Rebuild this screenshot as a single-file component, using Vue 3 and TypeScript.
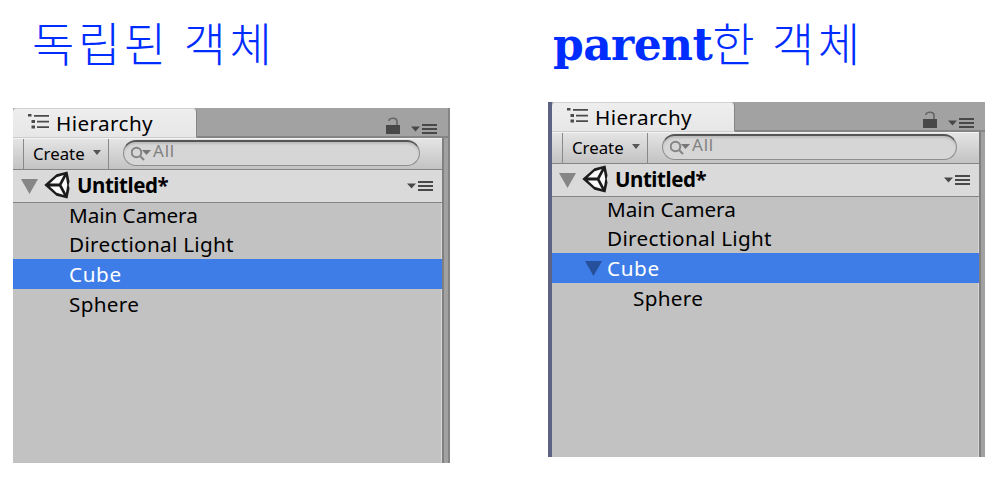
<script setup lang="ts">
interface Item {
  name: string
  indent?: boolean
  selected?: boolean
  open?: boolean
}
interface Panel {
  id: string
  latin: string
  hangul: string
  items: Item[]
}

const panels: Panel[] = [
  {
    id: 'separate',
    latin: '',
    hangul: '독립된 객체',
    items: [
      { name: 'Main Camera' },
      { name: 'Directional Light' },
      { name: 'Cube', selected: true },
      { name: 'Sphere' },
    ],
  },
  {
    id: 'parented',
    latin: 'parent',
    hangul: '한 객체',
    items: [
      { name: 'Main Camera' },
      { name: 'Directional Light' },
      { name: 'Cube', selected: true, open: true },
      { name: 'Sphere', indent: true },
    ],
  },
]
</script>

<template>
  <main class="page">
    <section v-for="p in panels" :key="p.id" class="column" :class="p.id">
      <h1 class="heading"><span v-if="p.latin" class="latin">{{ p.latin }}</span><span class="hangul">{{ p.hangul }}</span></h1>
      <div class="window">
        <div class="tabbar">
          <div class="tab">
            <svg class="tree" width="21" height="16" viewBox="0 0 21 16" fill="#4a4a4a">
              <path d="M0 0h3.500v2.500H0zM3.500 6h3.500v3H3.500zM3.500 11.500h3.500v3H3.500zM6 1h15v1.800H6zM9 6.700h12v1.800H9zM9 12.200h12v1.800H9z" />
            </svg>
            <span class="tab-name">Hierarchy</span>
          </div>
          <svg class="lock" width="14" height="18" viewBox="0 0 14 18">
            <path d="M3 4V3.200Q3.500 1.200 7 1.200Q11 1.200 11 4.500V9" fill="none" stroke="#666" stroke-width="1.600" />
            <path d="M0 8h14v9H0z" fill="#484848" />
          </svg>
          <svg class="menu" width="26" height="10" viewBox="0 0 26 10" fill="#484848">
            <path d="M0 2.500h9L4.500 7.500zM11 0h15v2H11zM11 4h15v2H11zM11 8h15v2H11z" />
          </svg>
        </div>
        <div class="toolbar">
          <div class="create">
            <span>Create</span>
            <svg width="8" height="5" viewBox="0 0 8 5"><path d="M0 0h8L4 5z" fill="#555" /></svg>
          </div>
          <div class="search">
            <svg width="22" height="16" viewBox="0 0 22 16">
              <circle cx="5.500" cy="6.500" r="4.800" fill="none" stroke="#858585" stroke-width="2" />
              <path d="M9 10l4 4" stroke="#858585" stroke-width="2.200" />
              <path d="M11 4h9l-4.500 5z" fill="#777" />
            </svg>
            <span>All</span>
          </div>
        </div>
        <div class="scene">
          <svg class="fold" width="17" height="15" viewBox="0 0 17 15"><path d="M0 0h17L8.500 15z" fill="#868686" /></svg>
          <svg class="logo" width="27" height="28" viewBox="0 0 27 28">
            <path d="M25.500 10.500L23.500 0.500 12.500 3.300 0.300 14l12.200 10.700 11 2.800 2-10L24.700 14z" fill="#1b1b1b" />
            <path d="M5.800 12.600L12.600 6.300 19.800 4l-4.600 8.600zM5.800 15.400l6.800 6.300 7.200 2.300-4.600-8.600zM17.500 14l4.400-8.200L23.300 14l-1.400 8.200z" fill="#fafafa" />
          </svg>
          <span class="scene-name">Untitled*</span>
          <svg class="menu" width="26" height="10" viewBox="0 0 26 10" fill="#484848">
            <path d="M0 2.500h9L4.500 7.500zM11 0h15v2H11zM11 4h15v2H11zM11 8h15v2H11z" />
          </svg>
        </div>
        <ul class="items">
          <li v-for="i in p.items" :key="i.name" :class="{ selected: i.selected, indent: i.indent }">
            <span class="arrow">
              <svg v-if="i.open" width="17" height="15" viewBox="0 0 17 15"><path d="M0 0h17L8.500 15z" fill="#27509a" /></svg>
            </span>
            <span class="name">{{ i.name }}</span>
          </li>
        </ul>
      </div>
    </section>
  </main>
</template>

<style>
body {
  background: #fff;
}
</style>

<style scoped>
.page {
  display: flex;
  gap: 98px;
  width: 996px;
  height: 482px;
  padding-left: 13px;
  box-sizing: border-box;
  overflow: hidden;
  font-family: "Noto Sans", "Open Sans", sans-serif;
  color: #000;
}
.column {
  width: 437px;
  flex: none;
}
.heading {
  box-sizing: border-box;
  height: 108px;
  margin: 0;
  padding: 7px 0 0 19px;
  font-weight: 300;
  line-height: 68px;
  color: #002dff;
  white-space: nowrap;
  display: flex;
}
.parented .heading {
  height: 102px;
  padding-left: 5px;
}
.hangul {
  font-family: "Noto Sans CJK KR", sans-serif;
  font-size: 46px;
  letter-spacing: 3.600px;
}
.latin {
  font-family: "DejaVu Serif", serif;
  font-weight: 700;
  font-size: 44px;
  letter-spacing: -0.600px;
  padding-top: 4px;
}
.window {
  box-sizing: border-box;
  height: 355px;
  background: #c2c2c2;
  border-right: 2px solid #858585;
  box-shadow: inset -4px 0 #a1a1a1, inset -6px 0 #808080, inset -7px 0 #d6d6d6;
  padding-right: 6px;
  display: flex;
  flex-direction: column;
}
.parented .window {
  border-left: 4px solid #5b6283;
  border-right: 0;
}
.tabbar {
  box-sizing: border-box;
  height: 30px;
  flex: none;
  display: flex;
  align-items: flex-start;
  background: #a2a2a2;
  border-bottom: 2px solid #858585;
  padding-right: 11px;
  margin-right: -6px;
}
.tab {
  box-sizing: border-box;
  width: 184px;
  height: 30px;
  flex: none;
  display: flex;
  border-right: 1px solid #858585;
  border-bottom: 1px solid #ccc;
  border-radius: 4px 4px 0 0;
  background: linear-gradient(#eee, #e7e7e7);
  box-shadow: inset 0 1px #d2d2d2;
}
.parented .tab {
  width: 183px;
}
.tree {
  margin: 6px 0 0 15px;
}
.tab-name {
  margin-left: 7px;
  font-size: 20.700px;
  line-height: 31px;
  letter-spacing: 0.400px;
}
.lock {
  margin: 9px 11px 0 auto;
}
.tabbar .menu {
  margin-top: 16px;
}
.toolbar {
  box-sizing: border-box;
  height: 32px;
  flex: none;
  display: flex;
  padding-left: 10px;
  border-top: 1px solid #f3f3f3;
  border-bottom: 1px solid #858585;
  background: linear-gradient(#e4e4e4, #c3c3c3);
}
.create {
  box-sizing: border-box;
  width: 86px;
  height: 30px;
  display: flex;
  align-items: center;
  gap: 8px;
  padding: 0 0 0 9px;
  border-left: 1px solid #888;
  border-right: 1px solid #888;
  font-size: 16.800px;
  line-height: 29px;
}
.create span {
  margin-top: -2px;
}
.create svg {
  margin-top: -3px;
}
.search {
  box-sizing: border-box;
  flex: 1;
  height: 26px;
  display: flex;
  align-items: center;
  margin: 1px 22px 0 14px;
  padding-left: 7px;
  border: 1px solid #8d8d8d;
  border-top: 2px solid #555;
  border-radius: 13px;
  background: #d6d6d6;
  box-shadow: inset 0 2px 2px #bdbdbd;
  color: #828282;
  font-size: 17px;
  line-height: 20px;
  letter-spacing: 0.800px;
}
.search span {
  margin-top: -5px;
}
.scene {
  box-sizing: border-box;
  height: 33px;
  flex: none;
  display: flex;
  align-items: center;
  padding: 0 9px 0 8px;
  background: #dadada;
  border-bottom: 1px solid #858585;
}
.parented .scene {
  padding-left: 7px;
}
.scene .fold {
  margin-top: 1px;
}
.scene .logo {
  margin-left: 6px;
  margin-top: -2px;
}
.scene-name {
  margin-left: 6px;
  margin-top: -3px;
  font-weight: 700;
  font-size: 20.500px;
  letter-spacing: -0.450px;
}
.scene .menu {
  margin-left: auto;
}
.items {
  list-style: none;
  margin: 0;
  padding: 0;
}
.items li {
  display: flex;
  align-items: center;
  height: 30px;
  box-sizing: border-box;
  padding-left: 33px;
  line-height: 30px;
  font-size: 20.700px;
  letter-spacing: 0.300px;
}
.parented .items li {
  padding-left: 32px;
}
.items li:first-child {
  height: 26px;
  letter-spacing: -0.050px;
}
.items li:first-child .name {
  margin-top: -2px;
}
.items li.selected {
  background: #3e7de7;
  color: #fff;
  letter-spacing: 0.600px;
}
.parented .items li.indent {
  padding-left: 58px;
}
.arrow {
  width: 23px;
  display: flex;
  align-items: center;
}
.parented .arrow {
  box-sizing: border-box;
  padding-left: 1px;
}
</style>
